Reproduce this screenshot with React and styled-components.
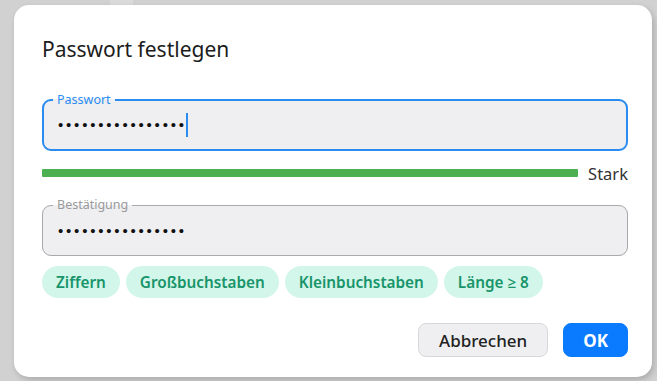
import styled, { createGlobalStyle } from 'styled-components';

const Global = createGlobalStyle`
  html, body {
    margin: 0;
    padding: 0;
    background: #d1d1d1;
  }
  body {
    font-family: "Noto Sans", "Open Sans", sans-serif;
    width: 657px;
    height: 381px;
    overflow: hidden;
    background: linear-gradient(to right, transparent 110px, #dadada 110px, #dadada 133px, transparent 133px) top / 100% 6px no-repeat, #d1d1d1;
  }
`;

const Dialog = styled.div`
  box-sizing: border-box;
  margin: 5px 0 0 14px;
  width: 638px;
  height: 372px;
  background: #fff;
  border-radius: 15px;
  box-shadow: 2px 3px 6px rgba(0, 0, 0, 0.18);
  padding: 31px 24px 0 28px;
  display: flex;
  flex-direction: column;
`;

const Title = styled.h2`
  margin: 0;
  font-size: 21px;
  font-weight: 400;
  line-height: 26px;
  color: #1c1c1c;
`;

const Field = styled.fieldset`
  margin: ${p => p.$top}px 0 0;
  padding: ${p => p.$active ? 5 : 6}px 14px 12px;
  border: ${p => p.$active ? '2px solid #2a8cf0' : '1px solid #a9a9ab'};
  border-radius: 9px;
  background: #efeff1;
  min-width: 0;
`;

const Legend = styled.legend`
  font-size: 12.5px;
  line-height: 16px;
  padding: 0 4px;
  margin-left: ${p => p.$active ? -5 : -4}px;
  color: ${p => p.$active ? '#2a8cf0' : '#9a9a9c'};
`;

const InputRow = styled.div`
  height: 24px;
  display: flex;
  align-items: center;
`;

const Dots = styled.span`
  font-family: "Liberation Sans", Arial, sans-serif;
  font-size: 15px;
  line-height: 24px;
  letter-spacing: 2.8px;
  color: #111;
  margin-left: ${p => p.$active ? 0 : 1}px;
`;

const Caret = styled.span`
  display: inline-block;
  width: 2px;
  height: 24px;
  background: #2a8cf0;
  margin-left: -1px;
`;

const StrengthRow = styled.div`
  display: flex;
  align-items: center;
  gap: 10px;
  margin-top: 11px;
  height: 22px;
`;

const Bar = styled.div`
  flex: 1;
  height: 8px;
  background: #4caf50;
  border-radius: 1px;
`;

const StrengthLabel = styled.span`
  font-size: 16.5px;
  color: #333;
`;

const Chips = styled.div`
  display: flex;
  gap: 6px;
  margin-top: 10px;
`;

const Chip = styled.span`
  height: 32px;
  padding: 0 14px;
  border-radius: 16px;
  background: #d3f6eb;
  color: #17946a;
  font-size: 15.3px;
  font-weight: 600;
  display: flex;
  align-items: center;
`;

const Actions = styled.div`
  display: flex;
  justify-content: flex-end;
  gap: 15px;
  margin-top: 25px;
`;

const Button = styled.button`
  height: 34px;
  box-sizing: border-box;
  padding: 0 ${p => p.$primary ? 19 : 20}px;
  border-radius: 8px;
  font-family: "Noto Sans", "Open Sans", sans-serif;
  font-size: 17px;
  font-weight: ${p => p.$primary ? 700 : 500};
  background: ${p => p.$primary ? '#0a7bff' : '#efeff1'};
  color: ${p => p.$primary ? '#fff' : '#222'};
  border: 1px solid ${p => p.$primary ? '#0a7bff' : '#d8d8da'};
`;

export default function App() {
  return (
    <>
      <Global />
      <Dialog>
        <Title>Passwort festlegen</Title>
        <Field $active $top={30}>
          <Legend $active>Passwort</Legend>
          <InputRow>
            <Dots $active>••••••••••••••••</Dots>
            <Caret />
          </InputRow>
        </Field>
        <StrengthRow>
          <Bar />
          <StrengthLabel>Stark</StrengthLabel>
        </StrengthRow>
        <Field $top={13}>
          <Legend>Bestätigung</Legend>
          <InputRow>
            <Dots>••••••••••••••••</Dots>
          </InputRow>
        </Field>
        <Chips>
          <Chip>Ziffern</Chip>
          <Chip>Großbuchstaben</Chip>
          <Chip>Kleinbuchstaben</Chip>
          <Chip>Länge ≥ 8</Chip>
        </Chips>
        <Actions>
          <Button>Abbrechen</Button>
          <Button $primary>OK</Button>
        </Actions>
      </Dialog>
    </>
  );
}
